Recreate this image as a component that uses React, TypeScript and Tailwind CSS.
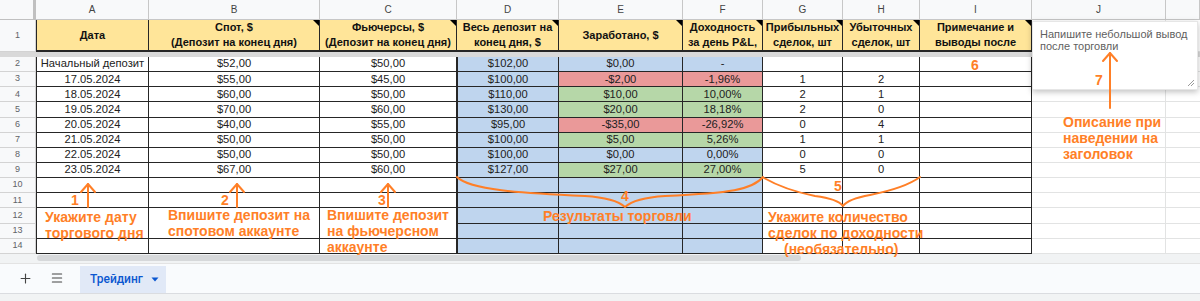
import React from 'react';
import { Plus, Menu } from 'lucide-react';

type Tone = 'blue' | 'red' | 'green';

const letters = ['', 'A', 'B', 'C', 'D', 'E', 'F', 'G', 'H', 'I', 'J', ''];

const headers: string[][] = [
  ['Дата'],
  ['Спот, $', '(Депозит на конец дня)'],
  ['Фьючерсы, $', '(Депозит на конец дня)'],
  ['Весь депозит на', 'конец дня, $'],
  ['Заработано, $'],
  ['Доходность', 'за день P&L,'],
  ['Прибыльных', 'сделок, шт'],
  ['Убыточных', 'сделок, шт'],
  ['Примечание и', 'выводы после'],
];

const rows: { v: string[]; tone: Tone }[] = [
  { v: ['Начальный депозит', '$52,00', '$50,00', '$102,00', '$0,00', '-', '', ''], tone: 'blue' },
  { v: ['17.05.2024', '$55,00', '$45,00', '$100,00', '-$2,00', '-1,96%', '1', '2'], tone: 'red' },
  { v: ['18.05.2024', '$60,00', '$50,00', '$110,00', '$10,00', '10,00%', '2', '1'], tone: 'green' },
  { v: ['19.05.2024', '$70,00', '$60,00', '$130,00', '$20,00', '18,18%', '2', '0'], tone: 'green' },
  { v: ['20.05.2024', '$40,00', '$55,00', '$95,00', '-$35,00', '-26,92%', '0', '4'], tone: 'red' },
  { v: ['21.05.2024', '$50,00', '$50,00', '$100,00', '$5,00', '5,26%', '1', '1'], tone: 'green' },
  { v: ['22.05.2024', '$50,00', '$50,00', '$100,00', '$0,00', '0,00%', '0', '0'], tone: 'blue' },
  { v: ['23.05.2024', '$67,00', '$60,00', '$127,00', '$27,00', '27,00%', '5', '0'], tone: 'green' },
];

const toneCls: Record<Tone, string> = {
  blue: 'bg-[#bfd5ee]',
  red: 'bg-[#ea9999]',
  green: 'bg-[#b6d7a8]',
};

const rowHead =
  'flex items-center justify-center bg-[#f8f9fa] border-r border-b border-[#d3d3d3] text-[9px] text-[#5f6368]';
const colHead =
  'flex items-center justify-center bg-[#f8f9fa] border-r border-b border-[#c7c7c7] text-[10px] text-[#444]';

function Sheet() {
  const cells: React.ReactNode[] = [];

  letters.forEach((l, i) =>
    cells.push(
      <div
        key={'c' + i}
        className={
          i === 0
            ? 'bg-[#f8f9fa] border-r-[3px] border-b border-[#c0c0c0]'
            : colHead
        }
      >
        {l}
      </div>
    )
  );

  // row 1: titles
  cells.push(
    <div key="rh1" className={rowHead}>
      1
    </div>
  );
  headers.forEach((h, i) =>
    cells.push(
      <div
        key={'t' + i}
        className={`relative flex flex-col items-center justify-center bg-[#ffe599] border-r border-b-2 border-[#262626] text-[11px] font-bold leading-[15px] text-[#111] whitespace-nowrap overflow-hidden ${
          i === 0 ? 'border-l' : ''
        }`}
      >
        {h.map((line) => (
          <span key={line}>{line}</span>
        ))}
        {i > 0 && (
          <span className="absolute right-0 top-0 h-0 w-0 border-t-[6px] border-l-[6px] border-t-black border-l-transparent" />
        )}
      </div>
    )
  );
  cells.push(<div key="t9" className="border-r border-b border-[#e2e3e3]" />);
  cells.push(<div key="t10" className="border-b border-[#e2e3e3]" />);

  // frozen divider
  cells.push(<div key="div" className="col-span-12 bg-[#d9d9d9]" />);

  for (let r = 0; r < 13; r++) {
    const rn = r + 2;
    const row = rows[r];
    cells.push(
      <div key={'rh' + rn} className={rowHead}>
        {rn}
      </div>
    );
    for (let c = 0; c < 9; c++) {
      let bg = 'bg-white';
      if (c === 3) bg = toneCls.blue;
      if (c === 4 || c === 5) bg = toneCls[row ? row.tone : 'blue'];
      const merged = rn === 12 && c <= 2;
      cells.push(
        <div
          key={`d${rn}-${c}`}
          className={`flex items-center justify-center ${bg} ${
            merged ? 'border-r' : 'border-r border-b'
          } ${c === 0 || c === 3 ? 'border-l' : ''} border-[#262626] text-[11.2px] leading-none text-[#222] whitespace-nowrap overflow-hidden`}
        >
          {row ? row.v[c] ?? '' : ''}
        </div>
      );
    }
    cells.push(<div key={'j' + rn} className="border-r border-b border-[#e2e3e3]" />);
    cells.push(<div key={'k' + rn} className="border-b border-[#e2e3e3]" />);
  }

  return (
    <div className="grid grid-cols-[36px_113px_171px_137px_102px_124px_80px_80px_77px_112px_134px_1fr] grid-rows-[20px_32px_5px_repeat(13,15.15px)]">
      {cells}
    </div>
  );
}

function ScrollBar() {
  return (
    <div className="flex h-[9px] items-center bg-[#f1f3f4] pl-[37px]">
      <div className="h-[6px] w-[764px] rounded-full bg-[#d6d8da]" />
    </div>
  );
}

function TabBar() {
  return (
    <>
      <div className="flex h-[30px] items-stretch border-t border-[#e3e3e3] bg-[#f9fbfd] font-['Roboto',Arial,sans-serif]">
        <div className="flex w-[50px] items-center justify-center pl-[1px]">
          <Plus size={15} strokeWidth={1.8} className="text-[#444]" />
        </div>
        <div className="flex w-[14px] items-center justify-center">
          <Menu size={14} strokeWidth={1.8} className="text-[#444]" />
        </div>
        <div className="ml-[16px] mt-[2px] flex w-[86px] items-center gap-[8px] bg-[#e1e9f7] pl-[10px]">
          <span className="text-[12px] font-medium text-[#0b57d0]">Трейдинг</span>
          <svg width="8" height="5" viewBox="0 0 8 5">
            <path d="M0.5 0.5h7L4 4.5z" fill="#0b57d0" />
          </svg>
        </div>
      </div>
      <div className="h-[8px] border-t border-[#dadce0] bg-[#f1f3f4]" />
    </>
  );
}

const note = "absolute font-['Liberation_Sans',Arial,sans-serif] text-[14px] font-bold leading-[16px] text-[#ff7f27] whitespace-nowrap";

function Overlays() {
  return (
    <>
      {/* hover note on column J header */}
      <div className="absolute left-[1032px] top-[21px] h-[69px] w-[166px] border border-[#e6e6e6] bg-white pl-[7px] pt-[6px] shadow-[0_2px_6px_rgba(0,0,0,0.25)]">
        <p className="text-[11px] leading-[12px] text-[#5f5f5f]">
          Напишите небольшой вывод
          <br />
          после торговли
        </p>
        <svg className="absolute bottom-[2px] right-[2px]" width="8" height="8" stroke="#9a9a9a" strokeWidth="1">
          <path d="M1 7L7 1M4 7L7 4" />
        </svg>
      </div>

      <svg
        className="pointer-events-none absolute left-0 top-0"
        width="1200"
        height="301"
        fill="none"
        stroke="#ff7f27"
        strokeWidth="2"
        strokeLinecap="round"
        strokeLinejoin="round"
      >
        {[88, 237, 388].map((x) => (
          <g key={x}>
            <path d={`M${x} 207V184`} />
            <path d={`M${x - 7} 192L${x} 184L${x + 7} 192`} />
          </g>
        ))}
        <path d="M1110 108V53" />
        <path d="M1103 61L1110 53L1117 61" />
        <path d="M457 177C470 190 520 193 585 196Q615 198 625 207Q635 198 665 196C730 193 752 190 763 177" />
        <path d="M764 178Q785 190 815 196Q838 199 843 206Q848 199 870 195Q905 188 920 177" />
      </svg>

      <span className={`${note} left-[71px] top-[192px]`}>1</span>
      <span className={`${note} left-[221px] top-[192px]`}>2</span>
      <span className={`${note} left-[378px] top-[192px]`}>3</span>
      <span className={`${note} left-[621px] top-[188px]`}>4</span>
      <span className={`${note} left-[834px] top-[178px]`}>5</span>
      <span className={`${note} left-[971px] top-[57px]`}>6</span>
      <span className={`${note} left-[1095px] top-[72px]`}>7</span>

      <div className={`${note} left-[45px] top-[209px]`}>
        Укажите дату
        <br />
        торгового дня
      </div>
      <div className={`${note} left-[168px] top-[207px]`}>
        Впишите депозит на
        <br />
        спотовом аккаунте
      </div>
      <div className={`${note} left-[327px] top-[207px]`}>
        Впишите депозит
        <br />
        на фьючерсном
        <br />
        аккаунте
      </div>
      <div className={`${note} left-[543px] top-[208px]`}>Результаты торговли</div>
      <div className={`${note} left-[768px] top-[209px]`}>
        Укажите количество
        <br />
        сделок по доходности
        <br />
        <span className="pl-[16px]">(необязательно)</span>
      </div>
      <div className={`${note} left-[1063px] top-[114px]`}>
        Описание при
        <br />
        наведении на
        <br />
        заголовок
      </div>
    </>
  );
}

export default function App() {
  return (
    <div className="relative h-[301px] w-[1200px] overflow-hidden bg-white font-['Liberation_Sans',Arial,sans-serif]">
      <Sheet />
      <ScrollBar />
      <TabBar />
      <Overlays />
    </div>
  );
}
